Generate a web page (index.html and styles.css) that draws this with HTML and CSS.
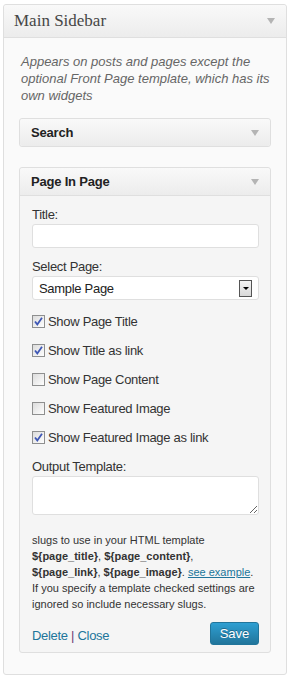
FILE: index.html
```html
<!DOCTYPE html>
<html lang="en">
<head>
  <meta charset="UTF-8" />
  <title>Widgets - Main Sidebar</title>
  <link rel="stylesheet" href="styles.css">
</head>
<body>
  <div class="sidebar">
    <div class="sidebar-head">
      <h3>Main Sidebar</h3>
      <span class="arrow"></span>
    </div>
    <div class="sidebar-body">
      <p class="desc">Appears on posts and pages except the optional Front Page template, which has its own widgets</p>

      <div class="widget">
        <div class="widget-head">
          <h4>Search</h4>
          <span class="arrow"></span>
        </div>
      </div>

      <div class="widget open">
        <div class="widget-head">
          <h4>Page In Page</h4>
          <span class="arrow"></span>
        </div>
        <div class="widget-inside">
          <div class="field first">
            <label for="pip-title">Title:</label>
            <input type="text" id="pip-title" class="text">
          </div>
          <div class="field">
            <label>Select Page:</label>
            <div class="select">
              <span>Sample Page</span>
              <span class="drop"><span class="drop-tri"></span></span>
            </div>
          </div>

          <label class="check on"><span class="box"><svg viewBox="0 0 11 11"><path d="M2 5.5 L4.3 8.4 L9 1.8" /></svg></span>Show Page Title</label>
          <label class="check on"><span class="box"><svg viewBox="0 0 11 11"><path d="M2 5.5 L4.3 8.4 L9 1.8" /></svg></span>Show Title as link</label>
          <label class="check"><span class="box"></span>Show Page Content</label>
          <label class="check"><span class="box"></span>Show Featured Image</label>
          <label class="check on"><span class="box"><svg viewBox="0 0 11 11"><path d="M2 5.5 L4.3 8.4 L9 1.8" /></svg></span>Show Featured Image as link</label>

          <div class="field template">
            <label for="pip-tpl">Output Template:</label>
            <textarea id="pip-tpl"></textarea>
          </div>

          <p class="help">slugs to use in your HTML template<br><b>${page_title}</b>, <b>${page_content}</b>,<br><b>${page_link}</b>, <b>${page_image}</b>. <a href="#">see example</a>.<br>If you specify a template checked settings are<br>ignored so include necessary slugs.</p>

          <div class="widget-control">
            <div class="links"><a href="#">Delete</a> <span class="sep">|</span> <a href="#">Close</a></div>
            <button type="button" class="save">Save</button>
          </div>
        </div>
      </div>
    </div>
  </div>
</body>
</html>
```

FILE: styles.css
```css
* { box-sizing: border-box; }
body {
  margin: 0;
  background: #fff;
  font-family: "Liberation Sans", Arial, sans-serif;
  font-size: 13px;
  color: #333;
}
.sidebar {
  width: 284px;
  margin: 4px 0 6px 3px;
  background: #fafafa;
  border: 1px solid #dfdfdf;
  border-radius: 3px;
}
.sidebar-head {
  height: 33px;
  display: flex;
  align-items: center;
  justify-content: space-between;
  padding: 0 10px 1px 10px;
  background: linear-gradient(#f9f9f9, #ececec);
  border-bottom: 1px solid #dfdfdf;
  border-radius: 3px 3px 0 0;
}
.sidebar-head h3 {
  margin: 0;
  font-family: "Liberation Serif", Georgia, serif;
  font-weight: normal;
  font-size: 17px;
  color: #464646;
}
.arrow {
  width: 0;
  height: 0;
  border-left: 4px solid transparent;
  border-right: 4px solid transparent;
  border-top: 6px solid #b4b4b4;
}
.sidebar-head .arrow { margin-right: 1px; }
.sidebar-body {
  padding: 15px 15px 21px;
}
.desc {
  margin: 0 0 14px 2px;
  font-style: italic;
  line-height: 17px;
  color: #666;
}
.widget {
  background: #f5f5f5;
  border: 1px solid #dfdfdf;
  border-radius: 3px;
  margin-bottom: 20px;
}
.widget.open { margin-bottom: 0; }
.widget-head {
  height: 27px;
  display: flex;
  align-items: center;
  justify-content: space-between;
  padding: 0 11px 0 11px;
  background: linear-gradient(#f9f9f9, #ececec);
  border-radius: 3px;
}
.widget.open .widget-head {
  height: 28px;
  border-bottom: 1px solid #dfdfdf;
  border-radius: 3px 3px 0 0;
}
.widget-head h4 {
  margin: 0;
  font-size: 13px;
  font-weight: bold;
  color: #222;
  letter-spacing: -0.2px;
}
.widget-inside {
  padding: 11px 11px 7px 12px;
  letter-spacing: -0.3px;
}
.field label {
  display: block;
  line-height: 16px;
  margin-bottom: 1px;
}
.field { margin-top: 11px; }
.field.first { margin-top: 0; }
input.text, .select, textarea {
  display: block;
  width: 100%;
  background: #fff;
  border: 1px solid #dfdfdf;
  border-radius: 3px;
  font-family: inherit;
  font-size: 13px;
  color: #333;
}
input.text { height: 24px; }
.select {
  height: 24px;
  display: flex;
  align-items: center;
  justify-content: space-between;
  padding: 0 6px 0 6px;
  color: #222;
}
.drop {
  width: 13px;
  height: 17px;
  border: 1px solid #555;
  background: linear-gradient(#f4f4f4, #d8d8d8);
  display: flex;
  align-items: center;
  justify-content: center;
}
.drop-tri {
  width: 0;
  height: 0;
  border-left: 3px solid transparent;
  border-right: 3px solid transparent;
  border-top: 3px solid #000;
}
.check {
  display: flex;
  align-items: center;
  height: 16px;
  margin-top: 13px;
  color: #333;
}
.box {
  width: 13px;
  height: 13px;
  margin: 0 3px 0 0;
  border: 1px solid #8e8f8f;
  background: linear-gradient(135deg, #dcdcdc, #fefefe);
  display: flex;
  align-items: center;
  justify-content: center;
}
.box svg {
  width: 11px;
  height: 11px;
}
.box path {
  fill: none;
  stroke: #3e57b5;
  stroke-width: 1.8;
}
.field.template { margin-top: 14px; }
textarea {
  height: 39px;
  resize: vertical;
}
.help {
  margin: 17px 0 0;
  font-size: 11px;
  line-height: 16px;
  letter-spacing: 0;
  white-space: nowrap;
  color: #333;
}
.help a { color: #21759b; }
.widget-control {
  display: flex;
  align-items: center;
  justify-content: space-between;
  margin-top: 10px;
}
.links { padding-top: 3px; }
.links a {
  color: #21759b;
  text-decoration: none;
}
.sep { color: #6b3a75; }
.save {
  width: 49px;
  height: 23px;
  padding: 0;
  border: 1px solid #21759b;
  border-radius: 3px;
  background: linear-gradient(#2e9fd2, #21759b);
  color: #fff;
  font-family: inherit;
  font-size: 13px;
  text-shadow: 0 -1px 0 rgba(0, 0, 0, 0.3);
}
```
